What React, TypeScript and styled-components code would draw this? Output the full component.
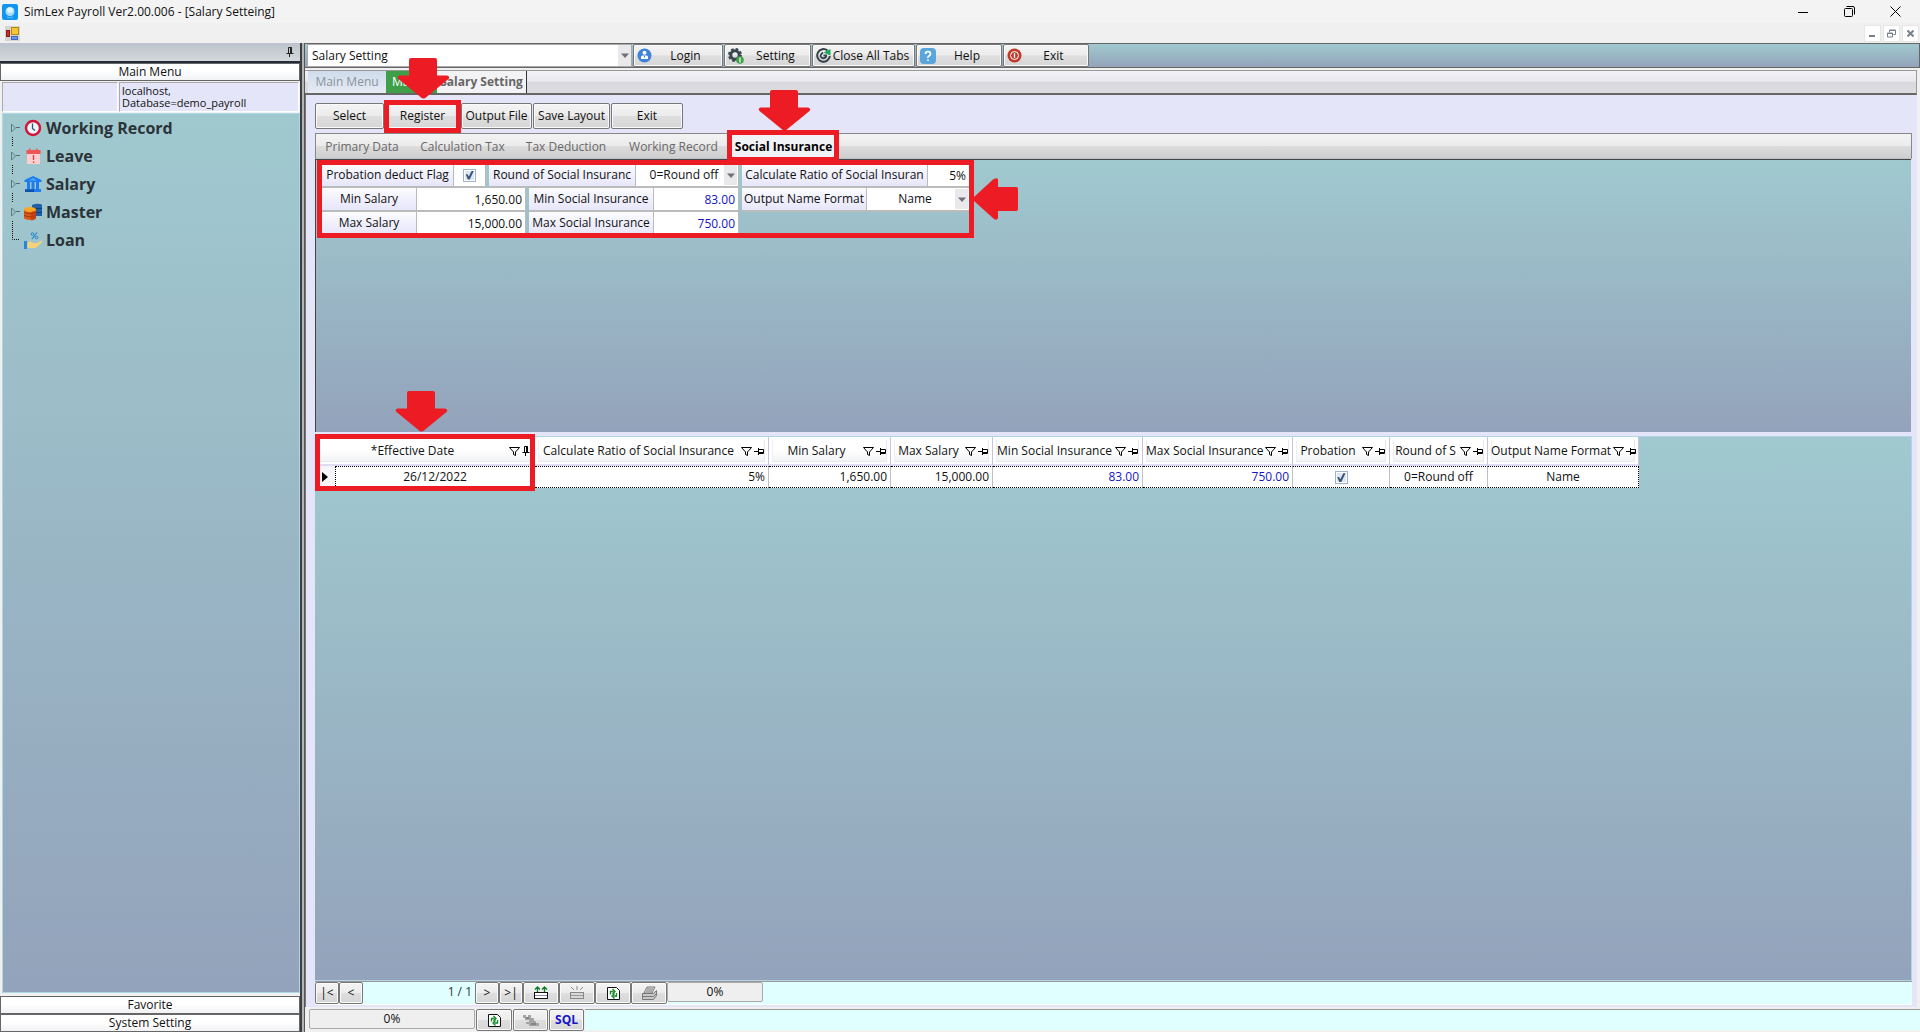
import React from "react";
import styled, { createGlobalStyle, css } from "styled-components";

const RED = "#ed1c24";
const POOL = "linear-gradient(180deg, #a0c9cf 0%, #93a3bb 100%)";
const GLOSS = "linear-gradient(180deg, #f3f3f3 0%, #ebebeb 48%, #dcdcdc 52%, #cfcfcf 100%)";
const SHEEN = "linear-gradient(180deg, #ffffff 0%, #ffffff 45%, #f1f2f4 100%)";

const GlobalStyle = createGlobalStyle`
  *, *::before, *::after { box-sizing: border-box; }
  body {
    margin: 0;
    background: #f0f0f0;
    color: #111;
    font-family: "Open Sans", "Noto Sans", sans-serif;
    font-size: 12px;
    line-height: 16px;
  }
  button, input, select { font: inherit; color: inherit; margin: 0; }
  svg { display: block; flex: none; }
`;

/* ---------- window frame ---------- */

const Window = styled.div`
  min-height: 100vh;
  display: flex;
  flex-direction: column;
  overflow: hidden;
`;

const TitleBar = styled.header`
  height: 23px;
  display: flex;
  align-items: center;
  gap: 6px;
  padding: 0 5px 0 2px;
  background: #f3f3f3;
`;

const Title = styled.h1`
  flex: 1;
  margin: 0;
  font-size: 12px;
  font-weight: 400;
`;

const CaptionButton = styled.button`
  width: 40px;
  height: 20px;
  padding: 0;
  display: grid;
  place-items: center;
  border: 0;
  background: none;
`;

const MenuBar = styled.div`
  height: 20px;
  display: flex;
  align-items: center;
  gap: 2px;
  padding: 0 1px 0 5px;
  background: #f0f0f0;
`;

const ChildButton = styled.button`
  width: 17px;
  height: 17px;
  padding: 0;
  display: grid;
  place-items: center;
  border: 1px solid #e6e6e6;
  background: #fff;
`;

const Spacer = styled.div`
  flex: 1;
`;

const Body = styled.div`
  flex: 1;
  display: flex;
`;

/* ---------- left pane ---------- */

const Side = styled.nav`
  width: 300px;
  flex: none;
  display: flex;
  flex-direction: column;
`;

const SideHead = styled.div`
  height: 20px;
  display: flex;
  justify-content: flex-end;
  align-items: center;
  padding-right: 6px;
  background: linear-gradient(180deg, #bcc3cb, #d3d8dc);
  border-bottom: 2px solid #242c3a;
`;

const SideBar = styled.button`
  height: 18px;
  width: 100%;
  padding: 0;
  line-height: 14px;
  background: ${SHEEN};
  border: 1px solid #666;
`;

const Info = styled.div`
  height: 31px;
  display: grid;
  grid-template-columns: 116px 1fr;
  gap: 1px;
  padding: 1px 1px 1px 2px;
`;

const InfoCell = styled.div`
  padding: 2px;
  font-size: 11px;
  line-height: 12px;
  background: #e4e5f8;
  border: 1px solid #aaa;
  border-right-color: #fff;
  border-bottom-color: #fff;
`;

const Tree = styled.ul`
  flex: 1;
  margin: 1px 0 3px 2px;
  padding: 0 0 0 7px;
  list-style: none;
  background: ${POOL};
  border: 1px solid #add8e6;
`;

const TreeItem = styled.li`
  height: 28px;
  display: flex;
  align-items: center;
  gap: 4px;
  font-size: 16px;
  font-weight: 700;
  color: #2b3338;
`;

const Splitter = styled.div`
  width: 5px;
  flex: none;
  background: #b4b4b4;
  border-left: 2px solid #3c3f41;
  border-right: 1px solid #555;
`;

/* ---------- main pane ---------- */

const Main = styled.main`
  flex: 1;
  min-width: 0;
  display: flex;
  flex-direction: column;
`;

const ToolBar = styled.div`
  height: 25px;
  display: flex;
  gap: 1px;
  padding-left: 2px;
  background: ${POOL};
  border: 1px solid #666;
  border-left: 0;
`;

const ComboFrame = styled.div`
  display: grid;
  width: ${(p: { $w?: number }) => (p.$w ? p.$w + "px" : "auto")};
  height: 100%;
  align-items: stretch;
  > * { grid-area: 1 / 1; }
`;

const ComboSelect = styled.select<{ $center?: boolean; $box?: boolean }>`
  appearance: none;
  width: 100%;
  min-width: 0;
  padding: 0 ${(p) => (p.$center ? 14 : 18)}px 0 ${(p) => (p.$center ? 8 : 4)}px;
  text-align-last: ${(p) => (p.$center ? "center" : "left")};
  background: #fff;
  border: ${(p) => (p.$box ? "1px solid #aaa" : "0")};
  border-radius: 0;
`;

const ComboArrow = styled.span`
  justify-self: end;
  display: grid;
  place-items: center;
  width: 13px;
  margin: 1px;
  background: #e9e9ec;
  pointer-events: none;
`;

const Btn = styled.button<{ $w: number; $icon?: boolean }>`
  width: ${(p) => p.$w}px;
  height: 100%;
  flex: none;
  display: flex;
  align-items: center;
  padding: 0 ${(p) => (p.$icon ? 3 : 0)}px;
  white-space: nowrap;
  justify-content: center;
  background: linear-gradient(180deg, #f4f4f4 0%, #ececec 48%, #dedede 52%, #d6d6d6 100%);
  border: 1px solid #777;
  border-radius: 2px;
  box-shadow: inset 0 0 0 1px #fafafa;
`;

const BtnText = styled.span`
  flex: 1;
  text-align: center;
`;

const PageTabs = styled.div`
  height: 25px;
  margin: 2px 3px 0 0;
  display: flex;
  padding-left: 3px;
  background: linear-gradient(180deg, #f2f2f7 0%, #e8e8ee 45%, #d8d8dd 52%, #dcdce2 100%);
  border: 1px solid #999;
  border-left: 0;
  border-bottom: 2px solid #666;
`;

const PageTab = styled.button<{ $kind: "plain" | "green" | "active"; $w: number }>`
  width: ${(p) => p.$w}px;
  padding: 0;
  border: 0;
  color: #8b949c;
  background: linear-gradient(180deg, #cfdceb, #e6ebf4);
  ${(p) =>
    p.$kind === "green" &&
    css`
      color: #fff;
      background: #3f9e48;
    `}
  ${(p) =>
    p.$kind === "active" &&
    css`
      color: #666;
      font-weight: 700;
      background: #f3f3f6;
      border-right: 1px solid #333;
    `}
`;

const Page = styled.section`
  flex: 1;
  display: flex;
  flex-direction: column;
  padding: 8px 5px 2px 9px;
  margin-right: 3px;
  border-left: 1px solid #777;
  background: #e4e5f8;
`;

const Actions = styled.div`
  display: flex;
  gap: 1px;
  height: 26px;
`;

const SubTabs = styled.div`
  height: 26px;
  margin: 4px 0 0;
  display: flex;
  background: ${GLOSS};
  border: 1px solid #888;
  border-bottom-color: #b8c4c8;
`;

const SubTab = styled.button<{ $w: number; $on?: boolean }>`
  width: ${(p) => p.$w}px;
  padding: 2px 0 0;
  border: 0;
  background: ${(p) => (p.$on ? "#f1f2f6" : "none")};
  color: ${(p) => (p.$on ? "#000" : "#686868")};
  font-weight: ${(p) => (p.$on ? 700 : 400)};
`;

const FormPanel = styled.div`
  flex: 0 0 273px;
  display: flex;
  align-items: flex-start;
  padding: 4px 0 0 6px;
  margin-right: 1px;
  border-left: 1px solid #444;
  border-top: 1px solid #444;
  background: ${POOL};
`;

const FormBox = styled.div`
  display: flex;
  gap: 3px;
`;

const FormColumn = styled.div<{ $w: number }>`
  width: ${(p) => p.$w}px;
  display: flex;
  flex-direction: column;
`;

const FormRow = styled.div`
  height: 24px;
  display: flex;
  gap: 3px;
`;

const Field = styled.div<{ $w: number }>`
  width: ${(p) => p.$w}px;
  flex: none;
  display: flex;
  border-right: 1px solid #bbb;
  border-bottom: 2px solid #bbb;
  background: #fff;
`;

const FieldLabel = styled.label<{ $w: number }>`
  width: ${(p) => p.$w}px;
  flex: none;
  line-height: 22px;
  text-align: center;
  white-space: nowrap;
  overflow: hidden;
  background: linear-gradient(180deg, #fbfbff, #e6e6fa);
  border-right: 1px solid #bbb;
`;

const FieldBody = styled.div`
  flex: 1;
  min-width: 0;
  display: grid;
  align-items: center;
  justify-items: center;
`;

const TextInput = styled.input<{ $blue?: boolean }>`
  width: 100%;
  height: 100%;
  padding: 0 3px;
  border: 0;
  background: #fff;
  text-align: right;
  color: ${(p) => (p.$blue ? "#1414c8" : "#111")};
`;

const CheckBox = styled.input.attrs({ type: "checkbox" })`
  appearance: none;
  width: 13px;
  height: 13px;
  vertical-align: middle;
  background: #dfe6ef;
  border: 1px solid #9fb4cc;
  box-shadow: inset 0 0 0 1px #fff;
  &:checked::after {
    content: "";
    display: block;
    width: 9px;
    height: 9px;
    margin: 1px;
    background: #36557f;
    clip-path: polygon(8% 42%, 28% 42%, 42% 66%, 76% 0, 100% 0, 52% 100%, 32% 100%);
  }
`;

/* ---------- grid ---------- */

const GridPanel = styled.div`
  flex: 1;
  margin-top: 4px;
  background: ${POOL};
  border: 1px solid #b4d4e6;
  border-left: 0;
`;

const Table = styled.table`
  width: 1324px;
  table-layout: fixed;
  border-collapse: separate;
  border-spacing: 0;
`;

const HeadCell = styled.th`
  height: 29px;
  padding: 3px 3px 2px 3px;
  font-weight: 400;
  background: #fff;
  border-right: 1px solid #c6c4e2;
  border-bottom: 2px solid #dedcf2;
`;

const HeadInner = styled.div`
  height: 22px;
  display: flex;
  align-items: center;
  gap: 2px;
  padding-right: 1px;
  background: ${SHEEN};
  box-shadow: inset -1px -1px 0 #e8e8f2, inset 1px 0 0 #eeeef5;
`;

const HeadText = styled.span`
  flex: 1;
  text-align: center;
  white-space: nowrap;
`;

const Cell = styled.td<{ $align?: string; $blue?: boolean }>`
  height: 22px;
  padding: 0 3px;
  background: #fff;
  text-align: ${(p) => p.$align || "center"};
  color: ${(p) => (p.$blue ? "#1414c8" : "#111")};
  border-top: 1px dotted #000;
  border-bottom: 1px dotted #000;
  border-right: 1px solid #c0c0c8;
  &:nth-child(2) { border-left: 1px dotted #000; }
  &:last-child { border-right: 1px dotted #000; }
`;

const RowMark = styled.td`
  padding: 0 0 0 7px;
  background: #f6f6fa;
`;

/* ---------- bottom bars ---------- */

const NavBar = styled.div`
  height: 24px;
  display: flex;
  background: #e0ffff;
  border-top: 1px solid #999;
  border-bottom: 1px solid #fff;
`;

const NavPosition = styled.output`
  width: 112px;
  padding-right: 3px;
  line-height: 20px;
  text-align: right;
  color: #333;
`;

const Progress = styled.div<{ $w: number }>`
  width: ${(p) => p.$w}px;
  flex: none;
  height: 20px;
  line-height: 18px;
  text-align: center;
  background: #efefef;
  border: 1px solid #aaa;
  border-radius: 2px;
`;

const StatusBar = styled.div`
  height: 25px;
  display: flex;
  gap: 1px;
  padding: 2px 0 1px 4px;
  background: #f0f0f0;
`;

const StatusFill = styled.div`
  flex: 1;
  height: 21px;
  background: #e0ffff;
  border-top: 1px solid #999;
`;

const SqlText = styled.b`
  color: #1414c8;
`;

/* ---------- red call-outs lying over the page ---------- */

const Anchor = styled.div`
  position: relative;
  display: flex;
  flex: none;
`;

/* Sits over the header and first row of the date column. */
const DateCallout = styled.div`
  position: relative;
  width: 220px;
  height: 57px;
  margin-top: -54px;
`;

const Frame = styled.div<{ $inset: string }>`
  position: absolute;
  z-index: 2;
  inset: ${(p) => p.$inset};
  border: 5px solid ${RED};
  pointer-events: none;
`;

const ArrowDownBox = styled.div<{ $gap: number; $center: string }>`
  position: absolute;
  z-index: 3;
  bottom: 100%;
  left: ${(p) => p.$center};
  margin: 0 0 ${(p) => p.$gap}px -26px;
`;

const ArrowLeftBox = styled.div`
  position: absolute;
  z-index: 3;
  left: 100%;
  top: 50%;
  margin: -22px 0 0 3px;
`;

const ArrowDown = ({ gap, center = "50%" }: { gap: number; center?: string }) => (
  <ArrowDownBox $gap={gap} $center={center}>
    <svg width="53" height="41" viewBox="0 0 53 41" fill={RED}>
      <path d="M14 0H38Q40 0 40 2V17.500H50Q53.500 18.500 51.500 21L29.500 39Q26.500 42 23.500 39L1.500 21Q-0.500 18.500 2.500 17.500H12V2Q12 0 14 0Z" />
    </svg>
  </ArrowDownBox>
);

const ArrowLeft = () => (
  <ArrowLeftBox>
    <svg width="45" height="42" viewBox="0 0 45 42" fill={RED}>
      <path d="M1 19L20 1.500Q25 -1 25 2V9H43Q45 9 45 11V31Q45 33 43 33H25V40Q24 43 21 41L1 23Q-1 21 1 19Z" />
    </svg>
  </ArrowLeftBox>
);

/* ---------- small drawings ---------- */

const Triangle = () => (
  <svg width="8" height="5" viewBox="0 0 8 5"><path d="M0 0.500h8L4 5z" fill="#707078" /></svg>
);

const FilterIcon = () => (
  <svg width="11" height="9" viewBox="0 0 11 9" fill="none" stroke="#000">
    <path d="M0.500 0.500h10L6.500 5v3.500L4.500 7.500V5z" />
  </svg>
);

const PinSide = () => (
  <svg width="10" height="10" viewBox="0 0 10 10" fill="none" stroke="#000">
    <path d="M0 5.500h4M4.500 2v7M4.500 3.500h5v4h-5M4.500 6.500h5" />
  </svg>
);

const PinDown = ({ color = "#000" }: { color?: string }) => (
  <svg width="8" height="10" viewBox="0 0 8 10" fill="none" stroke={color}>
    <path d="M2.500 6V0.500h3V6M5.500 0.500V6M4.500 0.500V6M0.500 6.500h7M3.500 7v3" />
  </svg>
);

const Expander = ({ leaf }: { leaf?: boolean }) => (
  <svg width="10" height="28" viewBox="0 0 10 28" fill="none" overflow="visible">
    {leaf ? (
      <path d="M2.500 -5V13.500H10" stroke="#111" strokeDasharray="1 1" />
    ) : (
      <>
        <path d="M1.500 10L5.500 14L1.500 18Z" stroke="#5d7b80" />
        <path d="M6.500 13.500H10M2.500 23V32" stroke="#111" strokeDasharray="1 1" />
      </>
    )}
  </svg>
);

const ClockIcon = () => (
  <svg width="18" height="18" viewBox="0 0 18 18">
    <circle cx="9" cy="9" r="7" fill="#eaf6fb" stroke="#d3143a" strokeWidth="2.500" />
    <path d="M8.500 4.500V9.500L11 11.500" fill="none" stroke="#35506a" strokeWidth="1.300" />
  </svg>
);

const CalendarIcon = () => (
  <svg width="18" height="18" viewBox="0 0 18 18">
    <rect x="3" y="4" width="13" height="13" fill="#fbcfcf" />
    <path d="M2.500 3H5V1.500h1.500V3h5.500V1.500h1.500V3h3v4h-14z" fill="#ee5555" />
    <path d="M9.500 8v5M9.500 14.500V16" stroke="#e33" strokeWidth="1.300" />
  </svg>
);

const BankIcon = () => (
  <svg width="18" height="18" viewBox="0 0 18 18" fill="#1c7df0">
    <path d="M0.500 7V5L9 1l8.500 4v2zM3 7h3v7H3zM7.500 7h3v7h-3zM12 7h3v7h-3zM1 14h16v3H1z" />
    <path d="M1 14.500h9V17H1z" fill="#1150a8" />
    <path d="M5 5.500L9 3l4 2.500z" fill="#55aaff" />
  </svg>
);

const DatabaseIcon = () => (
  <svg width="18" height="18" viewBox="0 0 18 18">
    <path d="M8 2q5-2 10-.5V13H8z" fill="#1f5fa5" />
    <path d="M8 5.500h10M8 9.500h10" stroke="#123e70" />
    <path d="M0 6v9.500q6 3 12 0V6z" fill="#dd5a18" />
    <ellipse cx="6" cy="6.500" rx="6" ry="2.500" fill="#f7a823" />
    <path d="M0 9.500q6 3 12 0M0 12.500q6 3 12 0" stroke="#a6350d" fill="none" />
    <path d="M7 9v8.500q3.500 0 5-2V8z" fill="#b8360f" opacity=".6" />
  </svg>
);

const LoanIcon = () => (
  <svg width="18" height="18" viewBox="0 0 18 18">
    <path d="M0 10h3v8H0z" fill="#2389dd" />
    <path d="M3.500 11.500q3-2 5.500 .5h4l4-2.500q1.500.5 0 2.500L12 17H3.500z" fill="#f5d27a" />
    <path d="M8 8L13 1.500" stroke="#2287d0" strokeWidth="1.200" />
    <circle cx="8.500" cy="3" r="1.300" fill="none" stroke="#2287d0" />
    <circle cx="12.500" cy="6.500" r="1.300" fill="none" stroke="#2287d0" />
  </svg>
);

const AppIcon = () => (
  <svg width="16" height="16" viewBox="0 0 16 16">
    <rect width="16" height="16" rx="2" fill="#1295ee" />
    <circle cx="8" cy="7.500" r="4.500" fill="#a8ddff" />
    <circle cx="8" cy="6" r="2.800" fill="#e6f6ff" />
    <path d="M5 13q3 1.500 6 0" stroke="#63bfff" fill="none" />
  </svg>
);

const FormIcon = () => (
  <svg width="15" height="15" viewBox="0 0 15 15">
    <rect width="15" height="15" fill="#d4d4d4" />
    <rect x="1.500" y="4.500" width="3" height="6" fill="#c9302c" stroke="#8b1a12" />
    <rect x="6.500" y="1.500" width="7" height="7" fill="#f4c731" stroke="#b48a0c" />
    <rect x="6.500" y="10.500" width="6" height="3" fill="#6b95e8" stroke="#3f66b8" />
  </svg>
);

const UserIcon = () => (
  <svg width="15" height="15" viewBox="0 0 15 15">
    <circle cx="7.500" cy="7.500" r="7" fill="#3f83d6" />
    <circle cx="7.500" cy="4.800" r="2" fill="#fff" />
    <path d="M4 11V9q0-1.500 1.500-1.500h4Q11 7.500 11 9v2z" fill="#fff" />
    <path d="M7.500 7.500v2" stroke="#3f83d6" />
  </svg>
);

const GearIcon = () => (
  <svg width="16" height="16" viewBox="0 0 16 16">
    <circle cx="7" cy="7" r="4.200" fill="none" stroke="#37474f" strokeWidth="3" />
    <circle cx="7" cy="7" r="6" fill="none" stroke="#37474f" strokeWidth="2" strokeDasharray="2.700 2" />
    <circle cx="12" cy="12" r="3.800" fill="#43a047" />
    <path d="M12 9.500v5" stroke="#fff" strokeWidth="1.200" />
  </svg>
);

const ReloadIcon = () => (
  <svg width="15" height="15" viewBox="0 0 15 15" fill="none">
    <path d="M11.500 2.500A6.300 6.300 0 1 0 13.800 8" stroke="#37434a" strokeWidth="2" />
    <path d="M11 7.500H7.500M10.500 8.500Q8 11.500 5.500 9.500T7 4.500" stroke="#37434a" strokeWidth="1.800" />
    <path d="M7.500 4.500L14.500 1v6.500z" fill="#18a85a" />
  </svg>
);

const HelpIcon = () => (
  <svg width="16" height="16" viewBox="0 0 16 16" fill="none">
    <rect width="16" height="16" rx="4" fill="#5aa5dc" />
    <path d="M5.500 6Q5.500 3.500 8 3.500T10.500 6Q10.500 7 9 8T8 10M8 11.500V13" stroke="#fff" strokeWidth="1.700" />
  </svg>
);

const PowerIcon = () => (
  <svg width="15" height="15" viewBox="0 0 15 15" fill="none">
    <circle cx="7.500" cy="7.500" r="7" fill="#c0392b" />
    <circle cx="7.500" cy="7.500" r="4" stroke="#fff" />
    <path d="M7.500 5v5" stroke="#fff" strokeWidth="1.300" />
  </svg>
);

const InsertIcon = ({ off }: { off?: boolean }) => (
  <svg width="16" height="14" viewBox="0 0 16 14" fill="none">
    <rect x="1.500" y="6.500" width="13" height="6" fill={off ? "#d8d8d8" : "#fff"} stroke={off ? "#888" : "#111"} />
    <path d="M2 9.500h12" stroke={off ? "#999" : "#88b"} />
    {off ? (
      <path d="M8 0v4M2 1l3 3M14 1l-3 3" stroke="#888" />
    ) : (
      <path d="M4.500 6V1M2 3.500l2.500-2.500L7 3.500M11.500 6V1M9 3.500l2.500-2.500L14 3.500" stroke="#0f7a22" strokeWidth="1.300" />
    )}
  </svg>
);

const RefreshIcon = () => (
  <svg width="13" height="13" viewBox="0 0 13 13" fill="none">
    <path d="M.500.500h9l3 3v9H.500z" fill="#fff" stroke="#111" />
    <path d="M3.500 7.500V4.500h3M5.500 2l2.500 2.500-2.500 2.500M9.500 6v3h-3M7.500 6.500l-2.500 2.500 2.500 2.500" stroke="#148a2c" strokeWidth="1.400" />
  </svg>
);

const PrinterIcon = () => (
  <svg width="17" height="15" viewBox="0 0 17 15" fill="#c9c9c9" stroke="#777">
    <path d="M6 1h8l-3 6H3z" fill="#e4e4e4" />
    <path d="M1.500 7.500h11l3-3v5l-3 4h-11z" />
    <path d="M6 3h6M5 5h6M1.500 10.500h11l3-3" />
  </svg>
);

const FadedIcon = () => (
  <svg width="17" height="13" viewBox="0 0 17 13" fill="#a4a4a4">
    <path d="M1 1h3v2h2V1h3v3h3v3h2v2h3v3H7v-2H4V8h3V6H3V4H1z" />
    <path d="M9 9h5v2H9zM4 3h3v2H4z" fill="#858585" />
  </svg>
);

/* ---------- content ---------- */

const menu = [
  { name: "Working Record", icon: <ClockIcon /> },
  { name: "Leave", icon: <CalendarIcon /> },
  { name: "Salary", icon: <BankIcon /> },
  { name: "Master", icon: <DatabaseIcon /> },
  { name: "Loan", icon: <LoanIcon />, leaf: true },
];

const tools = [
  { name: "Login", w: 90, icon: <UserIcon /> },
  { name: "Setting", w: 87, icon: <GearIcon /> },
  { name: "Close All Tabs", w: 103, icon: <ReloadIcon /> },
  { name: "Help", w: 86, icon: <HelpIcon /> },
  { name: "Exit", w: 86, icon: <PowerIcon /> },
];

const subTabs = [
  { name: "Primary Data", w: 92 },
  { name: "Calculation Tax", w: 109 },
  { name: "Tax Deduction", w: 98 },
  { name: "Working Record", w: 117 },
];

const columns = [
  { name: "Calculate Ratio of Social Insurance", w: 234, value: "5%", align: "right" },
  { name: "Min Salary", w: 122, value: "1,650.00", align: "right" },
  { name: "Max Salary", w: 102, value: "15,000.00", align: "right" },
  { name: "Min Social Insurance", w: 150, value: "83.00", align: "right", blue: true },
  { name: "Max Social Insurance", w: 150, value: "750.00", align: "right", blue: true },
  { name: "Probation", w: 97, check: true },
  { name: "Round of S", w: 98, value: "0=Round off" },
  { name: "Output Name Format", w: 151, value: "Name" },
];

type ComboProps = { id?: string; label?: string; value: string; w?: number; center?: boolean; box?: boolean };

const Combo = ({ id, label, value, w, center, box }: ComboProps) => (
  <ComboFrame $w={w}>
    <ComboSelect id={id} aria-label={label} $center={center} $box={box}>
      <option>{value}</option>
    </ComboSelect>
    <ComboArrow><Triangle /></ComboArrow>
  </ComboFrame>
);

type EntryProps = {
  id: string;
  label: string;
  lw: number;
  w: number;
  value?: string;
  blue?: boolean;
  kind?: "text" | "check" | "combo";
};

const Entry = ({ id, label, lw, w, value = "", blue, kind = "text" }: EntryProps) => (
  <Field $w={w}>
    <FieldLabel htmlFor={id} $w={lw}>{label}</FieldLabel>
    {kind === "combo" ? (
      <Combo id={id} value={value} w={w - lw - 1} center />
    ) : (
      <FieldBody>
        {kind === "check" ? (
          <CheckBox id={id} defaultChecked />
        ) : (
          <TextInput id={id} defaultValue={value} $blue={blue} />
        )}
      </FieldBody>
    )}
  </Field>
);

export default function App() {
  return (
    <Window>
      <GlobalStyle />
      <TitleBar>
        <AppIcon />
        <Title>SimLex Payroll Ver2.00.006 - [Salary Setteing]</Title>
        <CaptionButton aria-label="Minimize">
          <svg width="10" height="10" viewBox="0 0 10 10"><path d="M0 5.500h10" stroke="#000" /></svg>
        </CaptionButton>
        <CaptionButton aria-label="Restore">
          <svg width="11" height="11" viewBox="0 0 11 11" fill="none" stroke="#000">
            <rect x=".500" y="2.500" width="8" height="8" rx="1" /><path d="M2.500 .500H9q1.500 0 1.500 1.500v6.500" />
          </svg>
        </CaptionButton>
        <CaptionButton aria-label="Close">
          <svg width="11" height="11" viewBox="0 0 11 11"><path d="M.500.500l10 10M10.500.500l-10 10" stroke="#000" /></svg>
        </CaptionButton>
      </TitleBar>
      <MenuBar>
        <FormIcon />
        <Spacer />
        <ChildButton aria-label="Minimize page">
          <svg width="7" height="9" viewBox="0 0 7 9"><path d="M0 7h6" stroke="#76818c" strokeWidth="2" /></svg>
        </ChildButton>
        <ChildButton aria-label="Restore page">
          <svg width="9" height="9" viewBox="0 0 9 9" fill="none" stroke="#76818c">
            <path d="M.500 4h5v4h-5zM0 4.500h6M2.500 3V1h6v4.500H6.500M2 1.500h7" />
          </svg>
        </ChildButton>
        <ChildButton aria-label="Close page">
          <svg width="7" height="7" viewBox="0 0 7 7"><path d="M.500.500l6 6M6.500.500l-6 6" stroke="#76818c" strokeWidth="2" /></svg>
        </ChildButton>
      </MenuBar>
      <Body>
        <Side>
          <SideHead><PinDown color="#222" /></SideHead>
          <SideBar>Main Menu</SideBar>
          <Info>
            <InfoCell />
            <InfoCell>localhost,<br />Database=demo_payroll</InfoCell>
          </Info>
          <Tree>
            {menu.map((m) => (
              <TreeItem key={m.name}>
                <Expander leaf={m.leaf} />
                {m.icon}
                <span>{m.name}</span>
              </TreeItem>
            ))}
          </Tree>
          <SideBar>Favorite</SideBar>
          <SideBar>System Setting</SideBar>
        </Side>
        <Splitter />
        <Main>
          <ToolBar>
            <Combo label="Open page" value="Salary Setting" w={325} box />
            {tools.map((t) => (
              <Btn key={t.name} $w={t.w} $icon>
                {t.icon}
                <BtnText>{t.name}</BtnText>
              </Btn>
            ))}
          </ToolBar>
          <PageTabs>
            <PageTab $kind="plain" $w={78}>Main Menu</PageTab>
            <PageTab $kind="green" $w={51}>Master</PageTab>
            <PageTab $kind="active" $w={90}>Salary Setting</PageTab>
          </PageTabs>
          <Page>
            <Actions>
              <Btn $w={69}>Select</Btn>
              <Anchor>
                <Btn $w={75}>Register</Btn>
                <Frame $inset="-3px -1px -4px -1px" />
                <ArrowDown gap={4} />
              </Anchor>
              <Btn $w={71}>Output File</Btn>
              <Btn $w={77}>Save Layout</Btn>
              <Btn $w={72}>Exit</Btn>
            </Actions>
            <SubTabs>
              {subTabs.map((t) => (
                <SubTab key={t.name} $w={t.w}>{t.name}</SubTab>
              ))}
              <Anchor>
                <SubTab $w={103} $on>Social Insurance</SubTab>
                <Frame $inset="-4px -4px -4px -5px" />
                <ArrowDown gap={3} />
              </Anchor>
            </SubTabs>
            <FormPanel>
              <Anchor>
                <FormBox>
                  <FormColumn $w={417}>
                    <FormRow>
                      <Entry id="prob" label="Probation deduct Flag" lw={132} w={164} kind="check" />
                      <Entry id="round" label="Round of Social Insuranc" lw={147} w={250} kind="combo" value="0=Round off" />
                    </FormRow>
                    <FormRow>
                      <Entry id="minSal" label="Min Salary" lw={95} w={204} value="1,650.00" />
                      <Entry id="minSi" label="Min Social Insurance" lw={125} w={210} value="83.00" blue />
                    </FormRow>
                    <FormRow>
                      <Entry id="maxSal" label="Max Salary" lw={95} w={204} value="15,000.00" />
                      <Entry id="maxSi" label="Max Social Insurance" lw={125} w={210} value="750.00" blue />
                    </FormRow>
                  </FormColumn>
                  <FormColumn $w={228}>
                    <FormRow>
                      <Entry id="ratio" label="Calculate Ratio of Social Insuran" lw={186} w={228} value="5%" />
                    </FormRow>
                    <FormRow>
                      <Entry id="fmt" label="Output Name Format" lw={125} w={228} kind="combo" value="Name" />
                    </FormRow>
                  </FormColumn>
                </FormBox>
                <Frame $inset="-4px -4px -2px -5px" />
                <ArrowLeft />
              </Anchor>
            </FormPanel>
            <GridPanel>
              <Table>
                <colgroup>
                  <col style={{ width: 20 }} />
                  <col style={{ width: 200 }} />
                  {columns.map((c) => (
                    <col key={c.name} style={{ width: c.w }} />
                  ))}
                </colgroup>
                <thead>
                  <tr>
                    <HeadCell colSpan={2}>
                      <HeadInner>
                        <HeadText>*Effective Date</HeadText>
                        <FilterIcon />
                        <PinDown />
                      </HeadInner>
                    </HeadCell>
                    {columns.map((c) => (
                      <HeadCell key={c.name}>
                        <HeadInner>
                          <HeadText>{c.name}</HeadText>
                          <FilterIcon />
                          <PinSide />
                        </HeadInner>
                      </HeadCell>
                    ))}
                  </tr>
                </thead>
                <tbody>
                  <tr>
                    <RowMark>
                      <svg width="6" height="10" viewBox="0 0 6 10"><path d="M0 0l6 5-6 5z" /></svg>
                    </RowMark>
                    <Cell>26/12/2022</Cell>
                    {columns.map((c) => (
                      <Cell key={c.name} $align={c.align} $blue={c.blue}>
                        {c.check ? <CheckBox aria-label={c.name} defaultChecked /> : c.value}
                      </Cell>
                    ))}
                  </tr>
                </tbody>
              </Table>
              <DateCallout>
                <Frame $inset="0" />
                <ArrowDown gap={2} center="106px" />
              </DateCallout>
            </GridPanel>
            <NavBar>
              <Btn $w={24}>|&lt;</Btn>
              <Btn $w={24}>&lt;</Btn>
              <NavPosition>1 / 1</NavPosition>
              <Btn $w={24}>&gt;</Btn>
              <Btn $w={24}>&gt;|</Btn>
              <Btn $w={36} aria-label="Insert row"><InsertIcon /></Btn>
              <Btn $w={36} aria-label="Clear row"><InsertIcon off /></Btn>
              <Btn $w={36} aria-label="Refresh"><RefreshIcon /></Btn>
              <Btn $w={36} aria-label="Print"><PrinterIcon /></Btn>
              <Progress $w={96}>0%</Progress>
            </NavBar>
          </Page>
          <StatusBar>
            <Progress $w={166}>0%</Progress>
            <Btn $w={36} aria-label="Reload"><RefreshIcon /></Btn>
            <Btn $w={35} aria-label="Chart"><FadedIcon /></Btn>
            <Btn $w={35}><SqlText>SQL</SqlText></Btn>
            <StatusFill />
          </StatusBar>
        </Main>
      </Body>
    </Window>
  );
}
